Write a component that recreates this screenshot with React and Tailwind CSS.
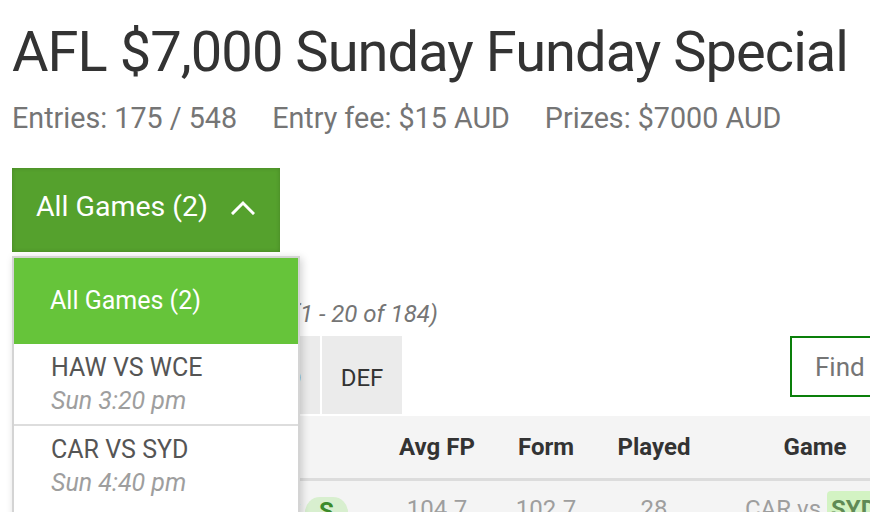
import React from "react";

function Chevron() {
  return (
    <svg width="24" height="15" viewBox="0 0 24 15" className="ml-[23px]">
      <polyline points="2,13 12,3 22,13" fill="none" stroke="white" strokeWidth="3" strokeLinecap="square" />
    </svg>
  );
}

export default function App() {
  const tabs = [
    { l: "ALL", w: "w-[70px]" },
    { l: "FWD", w: "w-[74px]" },
    { l: "RUC", w: "w-[78px]" },
    { l: "MID", w: "w-[80px]" },
    { l: "DEF", w: "w-[80px]" },
  ];
  return (
    <div className="relative w-[870px] h-[512px] overflow-hidden bg-white [font-family:Roboto,sans-serif]">
      <div className="pl-[12px] w-[1100px]">
        <h1 className="mt-[20px] text-[56px] leading-[64px] tracking-[-0.95px] text-[#333333] font-normal whitespace-nowrap">
          AFL $7,000 Sunday Funday Special
        </h1>
        <div className="mt-[18px] flex gap-[35px] text-[28.7px] leading-[32px] text-[#757575] whitespace-nowrap">
          <span>Entries: 175 / 548</span>
          <span>Entry fee: $15 AUD</span>
          <span>Prizes: $7000 AUD</span>
        </div>
        <div className="mt-[34px] w-[268px] h-[84px] bg-[#55a12d] shadow-[inset_0_0_4px_rgba(0,0,0,0.18)] flex items-center pl-[24px] pb-[6px] text-white text-[28.5px] leading-[32px]">
          <span>All Games (2)</span>
          <Chevron />
        </div>
        <div className="mt-[48px] h-[28px] text-[24px] leading-[28px] whitespace-nowrap flex">
          <span className="w-[280px] text-[#333333]">Available players</span>
          <span className="italic text-[#757575]">(1 - 20 of 184)</span>
        </div>
        <div className="mt-[8px] flex items-start w-[1078px]">
          <div className="flex gap-[2px]">
            {tabs.map((t) => (
              <div key={t.l} className={`${t.w} h-[78px] bg-[#ebebeb] text-[#333333] text-[24px] leading-[28px] flex justify-center pt-[28px]`}>
                {t.l}
              </div>
            ))}
          </div>
          <div className="ml-auto w-[300px] h-[61px] border-2 border-[#0a7f0a] flex items-center pl-[23px] text-[26px] leading-[30px] text-[#757575]">
            Find a player
          </div>
        </div>
        <div className="mt-[2px] w-[1078px]">
          <div className="flex h-[65px] bg-[#f4f4f4] border-b-[3px] border-[#dcdcdc] items-center font-bold text-[24px] leading-[28px] text-[#333333]">
            <div className="w-[365px] pl-[20px]">Player</div>
            <div className="w-[120px] text-center">Avg FP</div>
            <div className="w-[98px] text-center">Form</div>
            <div className="w-[118px] text-center">Played</div>
            <div className="w-[204px] text-center">Game</div>
          </div>
          <div className="flex h-[60px] bg-[#f4f4f4] pt-[14px] text-[24px] leading-[28px] text-[#9e9e9e] whitespace-nowrap">
            <div className="w-[365px] flex justify-end items-start pr-[29px]">
              <span className="text-[#3e9a2c]">Josh Kennedy</span>
              <span className="ml-[5px] mt-[2px] w-[43px] h-[30px] rounded-full bg-[#d8efcf] text-[#3b8a2a] font-bold flex justify-center">S</span>
            </div>
            <div className="w-[120px] text-center">104.7</div>
            <div className="w-[98px] text-center">102.7</div>
            <div className="w-[118px] text-center">28</div>
            <div className="w-[204px] flex items-start pl-[32px]">
              <span>CAR vs</span>
              <span className="ml-[6px] -mt-[4px] px-[4px] pt-[4px] h-[36px] rounded-sm bg-[#d3f3c3] text-[#5f8a55] font-bold">SYD</span>
            </div>
          </div>
        </div>
      </div>

      <div className="absolute left-[12px] top-[256px] w-[288px] h-[270px] bg-white border-2 border-[#d4d4d4] shadow-[2px_2px_8px_rgba(0,0,0,0.18)]">
        <div className="h-[86px] bg-[#66c43a] flex items-center pl-[36px] text-white text-[25px] leading-[30px]">
          All Games (2)
        </div>
        <div className="pt-[7px] pb-[7px] pl-[37px] border-b-2 border-[#dddddd] text-[25px] leading-[33px]">
          <div className="text-[#555555]">HAW VS WCE</div>
          <div className="italic text-[#9e9e9e]">Sun 3:20 pm</div>
        </div>
        <div className="pt-[7px] pb-[7px] pl-[37px] text-[25px] leading-[33px]">
          <div className="text-[#555555]">CAR VS SYD</div>
          <div className="italic text-[#9e9e9e]">Sun 4:40 pm</div>
        </div>
      </div>
    </div>
  );
}
